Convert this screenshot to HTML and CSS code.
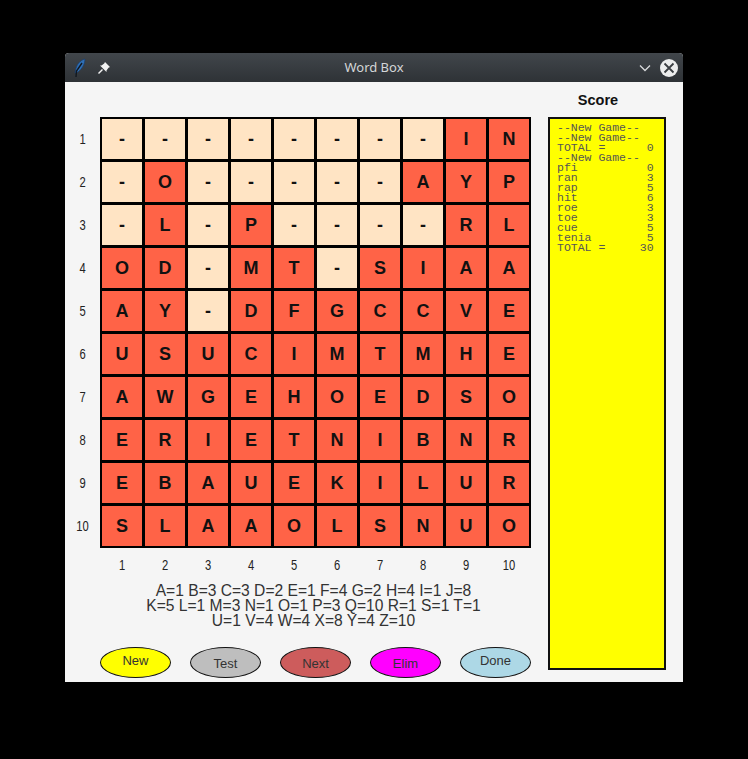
FILE: index.html
```html
<!DOCTYPE html>
<html lang="en">

<head>
    <meta charset="UTF-8">
    <meta name="viewport" content="width=device-width, initial-scale=1.0">
    <title>Word Box</title>
    <link rel="stylesheet" href="styles.css">
</head>

<body>
    <div class="window">
        <div class="titlebar">
            <div class="title-icons">
                <svg width="14" height="20" viewBox="0 0 14 20">
                    <path d="M12 1 C7 2 3 7 2.5 13 L2 15 L5 14 C9 11 12 6 12 1 Z" fill="#2f6fb5" stroke="#1d3f6b" stroke-width="0.8"/>
                    <path d="M3 19 L3.5 13 L9 5" fill="none" stroke="#111820" stroke-width="1.4"/>
                </svg>
                <svg width="14" height="14" viewBox="0 0 14 14">
                    <path d="M8 1 L13 6 L11.5 6.8 L9.5 9.5 L9.5 11 L3 4.5 L4.5 4.5 L7.2 2.5 Z" fill="#f2f2f2"/>
                    <path d="M5.5 8.5 L1.5 12.5" stroke="#f2f2f2" stroke-width="1.5"/>
                </svg>
            </div>
            <div class="title-text">Word Box</div>
            <div class="title-btns">
                <svg width="14" height="14" viewBox="0 0 14 14">
                    <path d="M2 4.5 L7 9.5 L12 4.5" fill="none" stroke="#d8dadc" stroke-width="1.3"/>
                </svg>
                <div class="close-btn">
                    <svg width="18" height="18" viewBox="0 0 18 18">
                        <path d="M4.5 4.5 L13.5 13.5 M13.5 4.5 L4.5 13.5" stroke="#3a3e42" stroke-width="1.8"/>
                    </svg>
                </div>
            </div>
        </div>

        <div class="content">
            <div class="left-side">
                <div class="board-wrap">
                    <div class="row-labels">
                        <span>1</span><span>2</span><span>3</span><span>4</span><span>5</span>
                        <span>6</span><span>7</span><span>8</span><span>9</span><span>10</span>
                    </div>
                    <div class="board">
                        <div class="cell used">-</div><div class="cell used">-</div><div class="cell used">-</div><div class="cell used">-</div><div class="cell used">-</div><div class="cell used">-</div><div class="cell used">-</div><div class="cell used">-</div><div class="cell">I</div><div class="cell">N</div>
                        <div class="cell used">-</div><div class="cell">O</div><div class="cell used">-</div><div class="cell used">-</div><div class="cell used">-</div><div class="cell used">-</div><div class="cell used">-</div><div class="cell">A</div><div class="cell">Y</div><div class="cell">P</div>
                        <div class="cell used">-</div><div class="cell">L</div><div class="cell used">-</div><div class="cell">P</div><div class="cell used">-</div><div class="cell used">-</div><div class="cell used">-</div><div class="cell used">-</div><div class="cell">R</div><div class="cell">L</div>
                        <div class="cell">O</div><div class="cell">D</div><div class="cell used">-</div><div class="cell">M</div><div class="cell">T</div><div class="cell used">-</div><div class="cell">S</div><div class="cell">I</div><div class="cell">A</div><div class="cell">A</div>
                        <div class="cell">A</div><div class="cell">Y</div><div class="cell used">-</div><div class="cell">D</div><div class="cell">F</div><div class="cell">G</div><div class="cell">C</div><div class="cell">C</div><div class="cell">V</div><div class="cell">E</div>
                        <div class="cell">U</div><div class="cell">S</div><div class="cell">U</div><div class="cell">C</div><div class="cell">I</div><div class="cell">M</div><div class="cell">T</div><div class="cell">M</div><div class="cell">H</div><div class="cell">E</div>
                        <div class="cell">A</div><div class="cell">W</div><div class="cell">G</div><div class="cell">E</div><div class="cell">H</div><div class="cell">O</div><div class="cell">E</div><div class="cell">D</div><div class="cell">S</div><div class="cell">O</div>
                        <div class="cell">E</div><div class="cell">R</div><div class="cell">I</div><div class="cell">E</div><div class="cell">T</div><div class="cell">N</div><div class="cell">I</div><div class="cell">B</div><div class="cell">N</div><div class="cell">R</div>
                        <div class="cell">E</div><div class="cell">B</div><div class="cell">A</div><div class="cell">U</div><div class="cell">E</div><div class="cell">K</div><div class="cell">I</div><div class="cell">L</div><div class="cell">U</div><div class="cell">R</div>
                        <div class="cell">S</div><div class="cell">L</div><div class="cell">A</div><div class="cell">A</div><div class="cell">O</div><div class="cell">L</div><div class="cell">S</div><div class="cell">N</div><div class="cell">U</div><div class="cell">O</div>
                    </div>
                </div>

                <div class="col-labels">
                    <span>1</span><span>2</span><span>3</span><span>4</span><span>5</span>
                    <span>6</span><span>7</span><span>8</span><span>9</span><span>10</span>
                </div>

                <div class="letter-values">
                    <div>A=1 B=3 C=3 D=2 E=1 F=4 G=2 H=4 I=1 J=8</div>
                    <div>K=5 L=1 M=3 N=1 O=1 P=3 Q=10 R=1 S=1 T=1</div>
                    <div>U=1 V=4 W=4 X=8 Y=4 Z=10</div>
                </div>

                <div class="buttons">
                    <div class="oval-btn new raised">New</div>
                    <div class="oval-btn test">Test</div>
                    <div class="oval-btn next">Next</div>
                    <div class="oval-btn elim">Elim</div>
                    <div class="oval-btn done raised">Done</div>
                </div>
            </div>

            <div class="right-side">
                <div class="score-title">Score</div>
                <pre class="score-list">--New Game--
--New Game--
TOTAL =      0
--New Game--
pfi          0
ran          3
rap          5
hit          6
roe          3
toe          3
cue          5
tenia        5
TOTAL =     30</pre>
            </div>
        </div>
    </div>
</body>

</html>
```

FILE: styles.css
```css
* {
    margin: 0;
    padding: 0;
    box-sizing: border-box;
}

body {
    background: #000;
    padding: 53px 65px;
    font-family: 'Liberation Sans', Arial, sans-serif;
    color: #111;
}

.window {
    width: 618px;
    height: 629px;
    background: #f5f5f5;
    border-radius: 4px 4px 0 0;
    overflow: hidden;
}

.titlebar {
    height: 29px;
    background: linear-gradient(#41464b, #2e3236);
    display: flex;
    align-items: center;
    justify-content: space-between;
    padding: 0 5px 0 8px;
    position: relative;
}

.title-icons {
    display: flex;
    align-items: center;
    gap: 10px;
}

.title-text {
    position: absolute;
    left: 0;
    right: 0;
    padding-bottom: 2px;
    text-align: center;
    font-family: 'Noto Sans', sans-serif;
    font-size: 13px;
    color: #d4d6d8;
}

.title-btns {
    display: flex;
    align-items: center;
    gap: 8px;
    position: relative;
}

.close-btn {
    width: 18px;
    height: 18px;
    border-radius: 50%;
    background: #eceded;
}

.close-btn svg {
    display: block;
}

.content {
    display: flex;
    padding-top: 9px;
}

.left-side {
    width: 466px;
    padding-top: 26px;
}

.board-wrap {
    display: flex;
}

.row-labels {
    width: 35px;
    padding: 2px 0;
    display: grid;
    grid-template-rows: repeat(10, 40px);
    row-gap: 3px;
}

.row-labels span,
.col-labels span {
    font-size: 14px;
    color: #222;
    display: flex;
    align-items: center;
    justify-content: center;
    transform: scaleX(0.8);
}

.board {
    width: 431px;
    height: 431px;
    background: #000;
    padding: 2px;
    display: grid;
    grid-template-columns: repeat(10, 40px);
    grid-template-rows: repeat(10, 40px);
    gap: 3px;
}

.cell {
    background: #ff6347;
    display: flex;
    align-items: center;
    justify-content: center;
    padding-top: 1px;
    font-size: 18px;
    font-weight: bold;
}

.cell.used {
    background: #ffe4c4;
}

.col-labels {
    margin-left: 35px;
    padding: 0 2px;
    margin-top: 8px;
    height: 18px;
    display: grid;
    grid-template-columns: repeat(10, 40px);
    column-gap: 3px;
}

.letter-values {
    margin-left: 35px;
    margin-top: 9px;
    padding-right: 4px;
    text-align: center;
    font-size: 15.6px;
    line-height: 15px;
    color: #333;
}

.buttons {
    margin-left: 35px;
    margin-top: 19px;
    display: flex;
    gap: 19px;
}

.oval-btn {
    width: 71px;
    height: 31px;
    border: 1px solid #111;
    border-radius: 50%;
    display: flex;
    align-items: center;
    justify-content: center;
    padding-top: 1px;
    font-size: 13px;
    color: #333;
}

.oval-btn.raised {
    padding-top: 0;
    padding-bottom: 5px;
}

.new {
    background: #ffff00;
}

.test {
    background: #bebebe;
}

.next {
    background: #cd5c5c;
}

.elim {
    background: #ff00ff;
}

.done {
    background: #add8e6;
}

.right-side {
    margin-left: 17px;
    width: 118px;
}

.score-title {
    height: 26px;
    padding-right: 18px;
    line-height: 18px;
    text-align: center;
    font-size: 14.5px;
    font-weight: bold;
}

.score-list {
    height: 553px;
    background: #ffff00;
    border: 2px solid #111;
    padding: 4px 0 0 7px;
    font-family: 'Liberation Mono', 'Courier New', monospace;
    font-size: 11.5px;
    line-height: 10px;
    color: #555;
}
```
